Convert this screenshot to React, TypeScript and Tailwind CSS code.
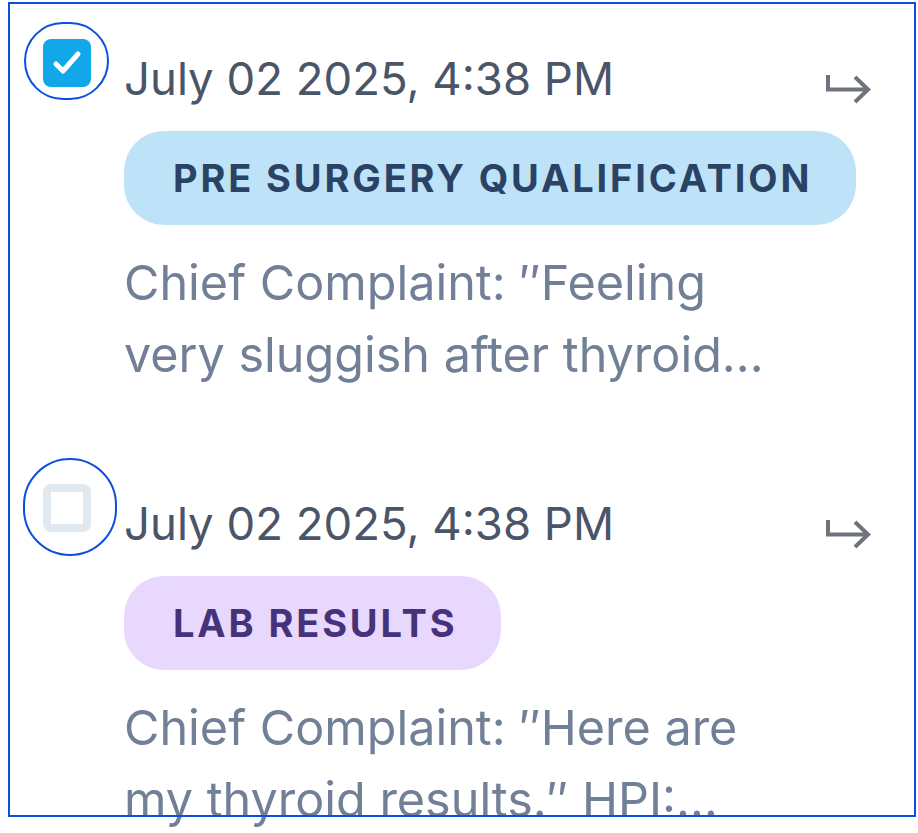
import React from "react";

function HookArrow() {
  return (
    <svg width="46" height="29" viewBox="0 0 46 29" fill="none" className="block">
      <path d="M2 0 V14.5 H42" stroke="#6f747c" strokeWidth="4" />
      <path d="M29 2 L42 14.5 L29 27" stroke="#6f747c" strokeWidth="4" />
    </svg>
  );
}

function CheckedBox() {
  return (
    <div className="w-[48px] h-[48px] rounded-[8px] bg-[#10a8e8] flex items-center justify-center">
      <svg width="36" height="36" viewBox="0 0 36 36" fill="none">
        <path d="M7 19 L14 26 L29 9" stroke="white" strokeWidth="5" strokeLinecap="round" strokeLinejoin="round" />
      </svg>
    </div>
  );
}

function EmptyBox() {
  return <div className="w-[48px] h-[48px] rounded-[8px] border-[8px] border-[#e2e8f0] bg-white" />;
}

type Item = {
  checked: boolean;
  date: string;
  tag: string;
  tagClass: string;
  text: string;
  circle: string;
};

const items: Item[] = [
  {
    checked: true,
    date: "July 02 2025, 4:38 PM",
    tag: "PRE SURGERY QUALIFICATION",
    tagClass: "bg-[#bee3f8] text-[#2a4365]",
    text: "Chief Complaint: \u2033Feeling very sluggish after thyroid surgery recovery.",
    circle: "left-[-19px] top-[-17px] w-[85px] h-[78px]",
  },
  {
    checked: false,
    date: "July 02 2025, 4:38 PM",
    tag: "LAB RESULTS",
    tagClass: "bg-[#e9d8fd] text-[#44337a]",
    text: "Chief Complaint: \u2033Here are my thyroid results.\u2033 HPI: Patient reports",
    circle: "left-[-20px] top-[-26px] w-[94px] h-[98px]",
  },
];

export default function App() {
  return (
    <div
      className="relative w-full h-[833px] overflow-hidden bg-white"
      style={{ fontFamily: "Inter, 'Noto Sans', sans-serif" }}
    >
      <div className="flex flex-col gap-[93px] pl-[43px] pr-[46px] pt-[39px]">
        {items.map((it, i) => (
          <div key={i} className="flex gap-[33px]">
            <div className="relative w-[48px] shrink-0">
              {it.checked ? <CheckedBox /> : <EmptyBox />}
              <div className={`absolute rounded-full border-2 border-[#0a4fe0] ${it.circle}`} />
            </div>
            <div className="flex-1 flex flex-col">
              <div className="flex justify-between mt-[12px] h-[56px]">
                <span className="text-[45.5px] leading-[56px] text-[#4a5568]">{it.date}</span>
                <div className="mt-[24px]">
                  <HookArrow />
                </div>
              </div>
              <div className="mt-[24px] flex">
                <span
                  className={`h-[94px] flex items-center pl-[49px] pr-[44px] rounded-[40px] text-[38px] font-bold tracking-[0.075em] ${it.tagClass}`}
                >
                  {it.tag}
                </span>
              </div>
              <p className="mt-[22px] w-[660px] text-[48.5px] leading-[72px] text-[#718096] line-clamp-2">
                {it.text}
              </p>
            </div>
          </div>
        ))}
      </div>
      <div className="pointer-events-none absolute left-[8px] top-[2px] w-[908px] h-[815px] border-2 border-[#0a4fe0]" />
    </div>
  );
}
